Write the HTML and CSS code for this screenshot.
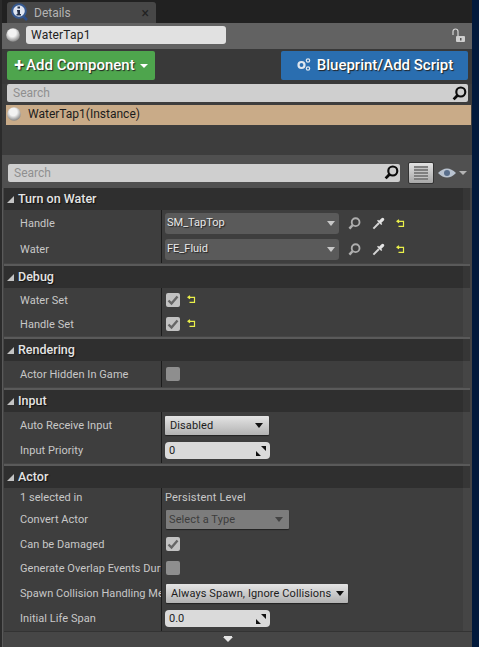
FILE: index.html
```html
<!DOCTYPE html>
<html lang="en">
<head>
  <meta charset="UTF-8">
  <title>Details</title>
  <link rel="stylesheet" href="styles.css">
</head>
<body>
  <svg class="defs" width="0" height="0">
    <defs>
      <radialGradient id="ball-fill" cx="0.45" cy="0.35" r="0.7">
        <stop offset="0.4" stop-color="#f2f2f2"/>
        <stop offset="1" stop-color="#777"/>
      </radialGradient>
    </defs>
    <symbol id="glass" viewBox="0 0 14 14">
      <circle cx="8.200" cy="5.600" r="4.200" fill="none" stroke="currentColor" stroke-width="2"/>
      <path d="M5 8.800 1.500 12.500" fill="none" stroke="currentColor" stroke-width="2.600"/>
    </symbol>
    <symbol id="dropper" viewBox="0 0 14 14">
      <path d="M1.500 12.500 7.500 6.500" fill="none" stroke="#d4d4d4" stroke-width="2.200"/>
      <path d="M6 3.500 10.500 8" fill="none" stroke="#e4e4e4" stroke-width="1.600"/>
      <path d="M9 5 11.500 2.500" fill="none" stroke="#e4e4e4" stroke-width="3.400" stroke-linecap="round"/>
    </symbol>
    <symbol id="reset" viewBox="0 0 9 9">
      <path d="M3 .8 1 2.300l2 1.500M1.500 2.300h6v5H2.500" fill="none" stroke="#eaf04a" stroke-width="1.200"/>
    </symbol>
    <symbol id="tick" viewBox="0 0 14 14">
      <path d="M2.500 7.500 5.500 10.500 11.500 3.500" fill="none" stroke="#666" stroke-width="2.400"/>
    </symbol>
    <symbol id="corner" viewBox="0 0 7 7">
      <path d="M7 0v7H0z" fill="#c4c4c4"/>
    </symbol>
    <symbol id="spin" viewBox="0 0 10 10">
      <path d="M10 0v5L5 0zM0 10V5l5 5z" fill="#111"/>
    </symbol>
    <symbol id="ball" viewBox="0 0 14 14">
      <circle cx="7" cy="7" r="6.800" fill="url(#ball-fill)"/>
    </symbol>
  </svg>

  <div class="window">
    <div class="tab-bar">
      <div class="tab">
        <svg class="tab-icon" width="18" height="19" viewBox="0 0 18 19">
          <path d="M12 13l4 4" stroke="#2c4f8c" stroke-width="2.600"/>
          <circle cx="8" cy="8" r="6.800" fill="#dfe6f2" stroke="#35588f" stroke-width="2"/>
          <path d="M6.500 3.500H9V5.500H6.500zM6 7h3v4h1v1.500H5.500V11h1V8.500H6z" fill="#26324a"/>
        </svg>
        <span class="tab-title">Details</span>
        <span class="tab-close">×</span>
      </div>
    </div>

    <div class="name-row">
      <svg class="ball" width="14" height="14"><use href="#ball"/></svg>
      <div class="name-input">WaterTap1</div>
      <svg class="lock" width="15" height="15" viewBox="0 0 15 15">
        <path d="M2 7V3.500a2.500 2.500 0 0 1 5 0V8" fill="none" stroke="#d6d6d6" stroke-width="1.200"/>
        <rect x="5" y="8" width="9" height="6" rx="1" fill="#cfcfcf"/>
        <rect x="9" y="10" width="1.500" height="2.500" fill="#555"/>
      </svg>
    </div>

    <div class="toolbar">
      <div class="btn btn-green">
        <span class="plus">+</span>
        <span>Add Component</span>
        <span class="btn-caret"></span>
      </div>
      <div class="btn btn-blue">
        <svg width="15" height="15" viewBox="0 0 15 15">
          <circle cx="5.500" cy="8" r="3" fill="none" stroke="#dfe6ee" stroke-width="2.200"/>
          <circle cx="12" cy="3.500" r="1.700" fill="none" stroke="#dfe6ee" stroke-width="1.200"/>
          <circle cx="12" cy="11.500" r="1.700" fill="none" stroke="#dfe6ee" stroke-width="1.200"/>
        </svg>
        <span>Blueprint/Add Script</span>
      </div>
    </div>

    <div class="search search-tree">
      <span>Search</span>
      <svg width="15" height="15" class="search-glass"><use href="#glass"/></svg>
    </div>

    <div class="tree">
      <div class="tree-row">
        <svg width="14" height="14"><use href="#ball"/></svg>
        <span>WaterTap1(Instance)</span>
      </div>
    </div>

    <div class="filter">
      <div class="search search-filter">
        <span>Search</span>
        <svg width="15" height="15" class="search-glass"><use href="#glass"/></svg>
      </div>
      <div class="grid-btn">
        <div class="grid-lines"></div>
      </div>
      <svg class="eye" width="18" height="10" viewBox="0 0 18 10">
        <path d="M0 5q9-9 18 0-9 9-18 0z" fill="#b9c3d0"/>
        <circle cx="9" cy="5" r="3" fill="#5a6f8c"/>
      </svg>
      <span class="eye-caret"></span>
    </div>

    <div class="sections">
      <section class="section">
        <h2 class="head"><svg width="7" height="7"><use href="#corner"/></svg>Turn on Water</h2>
        <div class="row h26">
          <div class="label">Handle</div>
          <div class="value">
            <div class="combo">SM_TapTop<span class="combo-caret"></span></div>
            <svg class="act act-glass" width="13" height="13"><use href="#glass"/></svg>
            <svg class="act" width="13" height="13"><use href="#dropper"/></svg>
            <svg class="act" width="9" height="9"><use href="#reset"/></svg>
          </div>
        </div>
        <div class="row h27">
          <div class="label">Water</div>
          <div class="value">
            <div class="combo">FE_Fluid<span class="combo-caret"></span></div>
            <svg class="act act-glass" width="13" height="13"><use href="#glass"/></svg>
            <svg class="act" width="13" height="13"><use href="#dropper"/></svg>
            <svg class="act" width="9" height="9"><use href="#reset"/></svg>
          </div>
        </div>
      </section>

      <section class="section">
        <h2 class="head"><svg width="7" height="7"><use href="#corner"/></svg>Debug</h2>
        <div class="row h24">
          <div class="label">Water Set</div>
          <div class="value">
            <div class="check"><svg width="14" height="14"><use href="#tick"/></svg></div>
            <svg class="act-reset" width="9" height="9"><use href="#reset"/></svg>
          </div>
        </div>
        <div class="row h24">
          <div class="label">Handle Set</div>
          <div class="value">
            <div class="check"><svg width="14" height="14"><use href="#tick"/></svg></div>
            <svg class="act-reset" width="9" height="9"><use href="#reset"/></svg>
          </div>
        </div>
      </section>

      <section class="section">
        <h2 class="head"><svg width="7" height="7"><use href="#corner"/></svg>Rendering</h2>
        <div class="row h26">
          <div class="label">Actor Hidden In Game</div>
          <div class="value"><div class="check check-off"></div></div>
        </div>
      </section>

      <section class="section">
        <h2 class="head"><svg width="7" height="7"><use href="#corner"/></svg>Input</h2>
        <div class="row h26">
          <div class="label">Auto Receive Input</div>
          <div class="value">
            <div class="drop drop-input">Disabled<span class="drop-caret"></span></div>
          </div>
        </div>
        <div class="row h25">
          <div class="label">Input Priority</div>
          <div class="value">
            <div class="num">0<svg width="10" height="10"><use href="#spin"/></svg></div>
          </div>
        </div>
      </section>

      <section class="section">
        <h2 class="head"><svg width="7" height="7"><use href="#corner"/></svg>Actor</h2>
        <div class="row h19">
          <div class="label">1 selected in</div>
          <div class="value value-text">Persistent Level</div>
        </div>
        <div class="row h25">
          <div class="label">Convert Actor</div>
          <div class="value">
            <div class="drop drop-off">Select a Type<span class="drop-caret"></span></div>
          </div>
        </div>
        <div class="row h24">
          <div class="label">Can be Damaged</div>
          <div class="value">
            <div class="check"><svg width="14" height="14"><use href="#tick"/></svg></div>
          </div>
        </div>
        <div class="row h24">
          <div class="label">Generate Overlap Events During Level Streaming</div>
          <div class="value"><div class="check check-off"></div></div>
        </div>
        <div class="row h26">
          <div class="label">Spawn Collision Handling Method</div>
          <div class="value">
            <div class="drop drop-spawn">Always Spawn, Ignore Collisions<span class="drop-caret"></span></div>
          </div>
        </div>
        <div class="row h25">
          <div class="label">Initial Life Span</div>
          <div class="value">
            <div class="num">0.0<svg width="10" height="10"><use href="#spin"/></svg></div>
          </div>
        </div>
      </section>

      <div class="more"><span class="more-arrow"></span></div>
    </div>
  </div>
</body>
</html>
```

FILE: styles.css
```css
html, body {
  margin: 0;
  height: 647px;
  overflow: hidden;
  background: #021a3c;
}

body {
  font-family: Roboto, "Liberation Sans", sans-serif;
  font-size: 11px;
  color: #c8c8c8;
}

.defs {
  display: block;
  height: 0;
}

.window {
  width: 472px;
  height: 647px;
  box-sizing: border-box;
  overflow: hidden;
  background: #3d3d3d;
  border-left: 2px solid #2b2b2b;
}

/* tab strip */
.tab-bar {
  height: 23px;
  padding: 2px 0 0 5px;
  box-sizing: border-box;
  background: #212121;
}

.tab {
  width: 149px;
  height: 21px;
  display: flex;
  align-items: center;
  padding-left: 4px;
  box-sizing: border-box;
  background: #474747;
  border-radius: 3px 3px 0 0;
}

.tab-title {
  margin-left: 5px;
  font-size: 12px;
  color: #b4b4b4;
}

.tab-close {
  margin-left: auto;
  margin-right: 7px;
  font-size: 14px;
  color: #222;
}

/* name row */
.name-row {
  height: 26px;
  display: flex;
  align-items: center;
  padding: 0 6px 2px 4px;
  box-sizing: border-box;
  background: #626262;
}

.name-input {
  width: 200px;
  height: 18px;
  margin-left: 6px;
  padding-left: 5px;
  box-sizing: border-box;
  line-height: 19px;
  font-size: 12px;
  letter-spacing: 0.2px;
  color: #222;
  background: #e1e1e1;
  border-radius: 3px;
}

.lock {
  margin-left: auto;
}

/* add component + blueprint */
.toolbar {
  height: 35px;
  display: flex;
  justify-content: space-between;
  padding: 2px 4px 0 5px;
  box-sizing: border-box;
  background: #393939;
}

.btn {
  height: 29px;
  display: flex;
  align-items: center;
  justify-content: center;
  padding-bottom: 2px;
  box-sizing: border-box;
  font-size: 15px;
  font-weight: 500;
  color: #fff;
  text-shadow: 1px 1px 1px #222;
  border-radius: 2px;
}

.btn-green {
  width: 148px;
  gap: 2px;
  background: #4ea54d;
}

.plus {
  font-size: 18px;
  font-weight: 700;
}

.btn-caret {
  width: 0;
  height: 0;
  margin-left: 3px;
  margin-top: 2px;
  border: 4px solid transparent;
  border-top: 4px solid #fff;
  border-bottom: 0;
}

.btn-blue {
  width: 187px;
  gap: 6px;
  background: #2a6eb0;
}

/* search boxes */
.search {
  height: 18px;
  display: flex;
  align-items: center;
  justify-content: space-between;
  padding: 0 1px 0 6px;
  box-sizing: border-box;
  font-size: 12px;
  color: #8f8f8f;
  background: #cfcfcf;
  border-radius: 2px;
}

.search-glass {
  color: #0c0c0c;
}

.search-tree {
  width: 461px;
  margin-left: 5px;
}

.tree {
  height: 53px;
  padding: 3px 1px 0 4px;
  box-sizing: border-box;
}

.tree-row {
  height: 20px;
  display: flex;
  align-items: center;
  gap: 7px;
  padding: 0 0 3px 1px;
  box-sizing: border-box;
  font-size: 12px;
  color: #1c1c1c;
  background: #c9ab88;
}

/* filter row */
.filter {
  height: 33px;
  display: flex;
  align-items: center;
  padding: 2px 0 0 6px;
  box-sizing: border-box;
  background: #505050;
}

.search-filter {
  width: 392px;
}

.grid-btn {
  width: 26px;
  height: 22px;
  margin-left: 8px;
  display: flex;
  align-items: center;
  justify-content: center;
  background: linear-gradient(#e2e2e2, #a8a8a8);
  border: 1px solid #333;
  box-sizing: border-box;
  border-radius: 2px;
}

.grid-lines {
  width: 14px;
  height: 14px;
  background: repeating-linear-gradient(#808080 0 2px, #c4c4c4 2px 3px);
}

.eye {
  margin-left: 4px;
}

.eye-caret {
  width: 0;
  height: 0;
  margin-left: 3px;
  border: 4px solid transparent;
  border-top: 4px solid #b4b4b4;
  border-bottom: 0;
}

/* detail sections */
.sections {
  padding-left: 1px;
  border-left: 1px solid #5a5a5a;
  background: #454545;
}

.section {
  margin-right: 2px;
}

.section + .section {
  margin-top: 1px;
  border-top: 2px solid #5a5a5a;
}

.head {
  height: 22px;
  margin: 0;
  display: flex;
  align-items: center;
  gap: 4px;
  padding-bottom: 2px;
  box-sizing: border-box;
  font-size: 12.500px;
  font-weight: 500;
  color: #e4e4e4;
  text-shadow: 1px 1px 1px #111;
  background: linear-gradient(to right, #2f2f2f 459px, #363636 459px);
}

.head svg {
  margin: 2px 0 0 3px;
}

.row {
  display: grid;
  grid-template-columns: 158px 1fr;
  background: linear-gradient(to right, #3e3e3e 459px, #454545 459px);
}

.h19 { height: 19px; }
.h24 { height: 24px; }
.h25 { height: 25px; }
.h26 { height: 26px; }
.h27 { height: 27px; }

.label {
  display: flex;
  align-items: center;
  padding-left: 16px;
  overflow: hidden;
  white-space: nowrap;
  letter-spacing: 0.05px;
  border-right: 1px solid #1c1c1c;
}

.value {
  display: flex;
  align-items: center;
  padding-left: 3px;
}

.value-text {
  letter-spacing: 0.2px;
}

.combo {
  width: 174px;
  height: 21px;
  display: flex;
  align-items: center;
  justify-content: space-between;
  padding: 0 4px 2px 2px;
  box-sizing: border-box;
  color: #e8e8e8;
  text-shadow: 1px 1px 1px #222;
  background: #5a5a5a;
  border-radius: 3px;
}

.combo-caret {
  width: 0;
  height: 0;
  margin-top: 2px;
  border: 4px solid transparent;
  border-top: 5px solid #c8c8c8;
  border-bottom: 0;
}

.act {
  margin-left: 11px;
  color: #aeaeae;
}

.act-glass {
  margin-left: 9px;
}

.act-reset {
  margin-left: 7px;
  margin-bottom: 2px;
}

.check {
  width: 14px;
  height: 14px;
  margin-left: 1px;
  background: #c2c2c2;
  border-radius: 2px;
}

.check svg {
  display: block;
}

.check-off {
  background: #8e8e8e;
}

.drop {
  height: 19px;
  display: flex;
  align-items: center;
  justify-content: space-between;
  box-sizing: border-box;
  padding: 0 6px 0 5px;
  color: #1c1c1c;
  letter-spacing: 0.1px;
  background: linear-gradient(#e4e4e4, #b2b2b2);
  border-radius: 1px;
  box-shadow: 0 1px 1px #222;
}

.drop-input {
  width: 104px;
}

.drop-spawn {
  width: 182px;
  margin-left: 1px;
  padding-right: 4px;
}

.drop-off {
  width: 123px;
  margin-left: 1px;
  padding-left: 3px;
  color: #3c3c3c;
  background: #7c7c7c;
}

.drop-caret {
  width: 0;
  height: 0;
  border: 4.500px solid transparent;
  border-top: 5px solid #111;
  border-bottom: 0;
}

.drop-off .drop-caret {
  border-top-color: #444;
}

.num {
  width: 105px;
  height: 17px;
  display: flex;
  align-items: center;
  justify-content: space-between;
  box-sizing: border-box;
  padding: 0 4px;
  color: #222;
  background: #dadada;
  border-radius: 4px;
}

.more {
  height: 16px;
  display: flex;
  justify-content: center;
  padding: 5px 21px 0 0;
  box-sizing: border-box;
  background: #464646;
  border-top: 1px solid #333;
}

.more-arrow {
  width: 0;
  height: 0;
  border: 5px solid transparent;
  border-top: 5px solid #e4e4e4;
  border-bottom: 0;
  box-shadow: 0 -2px 0 -1px #e4e4e4;
}
```
